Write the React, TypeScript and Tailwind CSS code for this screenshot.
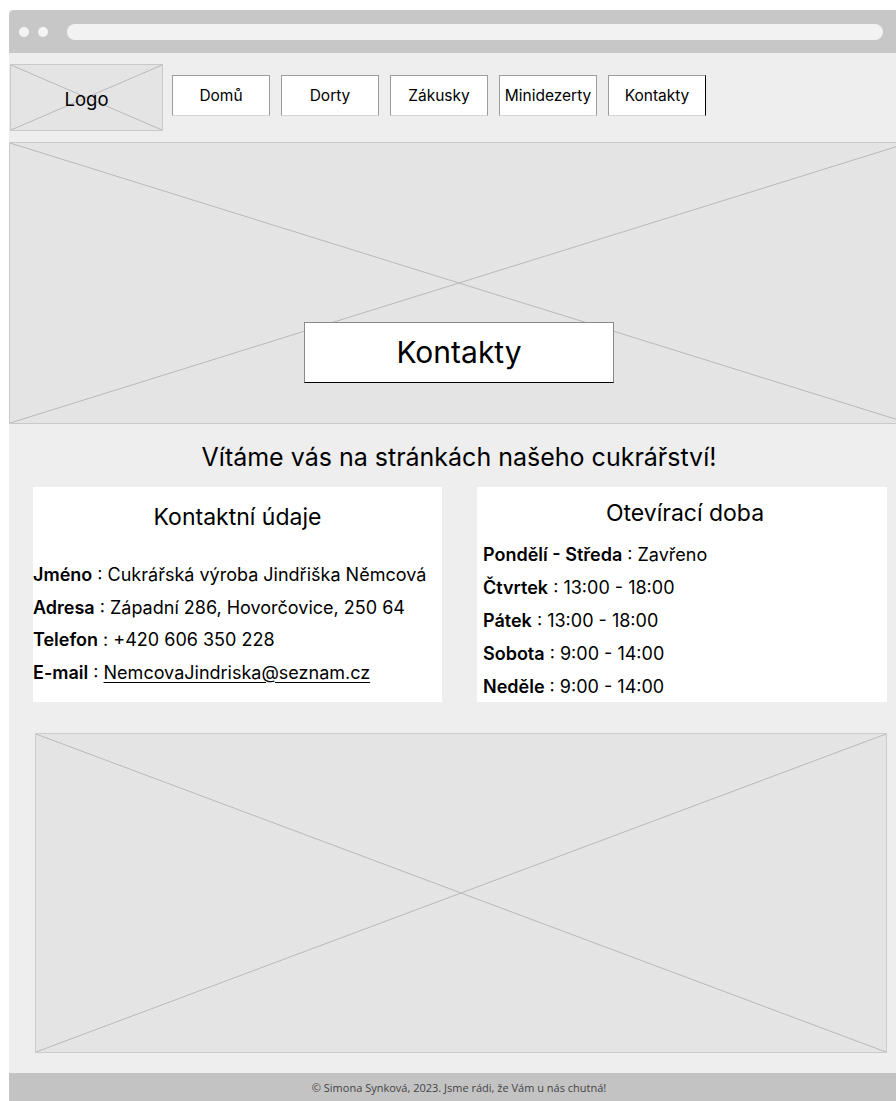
import React from "react";

const font = { fontFamily: "Inter, 'Noto Sans', sans-serif" };

function Cross({ className, children }: { className: string; children?: React.ReactNode }) {
  return (
    <div className={`relative ${className}`}>
      <svg className="absolute inset-0 h-full w-full" preserveAspectRatio="none" viewBox="0 0 100 100">
        <line x1="0" y1="0" x2="100" y2="100" stroke="#b9b9b9" strokeWidth="1" vectorEffect="non-scaling-stroke" />
        <line x1="100" y1="0" x2="0" y2="100" stroke="#b9b9b9" strokeWidth="1" vectorEffect="non-scaling-stroke" />
      </svg>
      {children}
    </div>
  );
}

const navItems = ["Domů", "Dorty", "Zákusky", "Minidezerty", "Kontakty"];

export default function App() {
  return (
    <div className="h-[1101px] w-[896px] overflow-hidden bg-white text-black" style={font}>
      <div className="ml-[9px] mt-[10px] w-[900px] bg-[#eeeeee]">
        {/* browser chrome */}
        <div className="flex h-[43px] items-center rounded-t-[5px] bg-[#c7c7c7] pl-[10px]">
          <span className="h-[10px] w-[10px] rounded-full bg-[#f4f4f4]" />
          <span className="ml-[9px] h-[10px] w-[10px] rounded-full bg-[#f4f4f4]" />
          <span className="ml-[19px] h-[16px] w-[816px] rounded-full bg-[#f2f2f2]" />
        </div>

        {/* header */}
        <div className="flex items-start pt-[11px]">
          <Cross className="ml-[1px] flex h-[67px] w-[153px] items-center justify-center border border-[#c9c9c9] bg-[#e4e4e4]">
            <span className="relative mt-[5px] text-[18.5px]">Logo</span>
          </Cross>
          <nav className="ml-[9px] mt-[11px] flex gap-[11px]">
            {navItems.map((item, i) => (
              <a
                key={item}
                className={`flex h-[41px] w-[98px] items-center justify-center border border-[#9c9c9c] border-b-[#d6d6d6] bg-white text-[15.5px] ${
                  i === navItems.length - 1 ? "border-r-black" : ""
                }`}
              >
                {item}
              </a>
            ))}
          </nav>
        </div>

        {/* hero */}
        <Cross className="mt-[11px] flex h-[282px] items-end justify-center border border-[#cacaca] bg-[#e4e4e4] pb-[40px]">
          <div className="relative flex h-[61px] w-[310px] items-center justify-center border border-[#8a8a8a] border-b-black bg-white text-[30px]">
            Kontakty
          </div>
        </Cross>

        <h1 className="mt-[18px] text-center text-[25px] leading-[30px]">Vítáme vás na stránkách našeho cukrářství!</h1>

        {/* info cards */}
        <div className="mt-[15px] flex gap-[35px] pl-[24px]">
          <section className="h-[215px] w-[409px] bg-white pt-[16px]">
            <h2 className="text-center text-[23px] leading-[28px]">Kontaktní údaje</h2>
            <div className="mt-[28px] text-[18px] leading-[32.5px]">
              <p>
                <b className="font-semibold">Jméno</b> : Cukrářská výroba Jindřiška Němcová
              </p>
              <p>
                <b className="font-semibold">Adresa</b> : Západní 286, Hovorčovice, 250 64
              </p>
              <p>
                <b className="font-semibold">Telefon</b> : +420 606 350 228
              </p>
              <p>
                <b className="font-semibold">E-mail</b> :{" "}
                <a className="underline decoration-1 underline-offset-[3px]">NemcovaJindriska@seznam.cz</a>
              </p>
            </div>
          </section>
          <section className="h-[215px] w-[410px] bg-white pl-[6px] pt-[12px]">
            <h2 className="text-center text-[23px] leading-[28px]">Otevírací doba</h2>
            <div className="mt-[11px] text-[18px] leading-[33px]">
              <p>
                <b className="font-semibold">Pondělí - Středa</b> : Zavřeno
              </p>
              <p>
                <b className="font-semibold">Čtvrtek</b> : 13:00 - 18:00
              </p>
              <p>
                <b className="font-semibold">Pátek</b> : 13:00 - 18:00
              </p>
              <p>
                <b className="font-semibold">Sobota</b> : 9:00 - 14:00
              </p>
              <p>
                <b className="font-semibold">Neděle</b> : 9:00 - 14:00
              </p>
            </div>
          </section>
        </div>

        {/* map placeholder */}
        <Cross className="ml-[26px] mt-[31px] h-[320px] w-[852px] border border-[#cdcdcd] bg-[#e4e4e4]" />

        <footer
          className="mt-[20px] flex h-[40px] items-start justify-center bg-[#c3c3c3] pt-[7px] text-[11px] text-[#444]"
          style={{ fontFamily: "'Open Sans', sans-serif" }}
        >
          © Simona Synková, 2023. Jsme rádi, že Vám u nás chutná!
        </footer>
      </div>
    </div>
  );
}
